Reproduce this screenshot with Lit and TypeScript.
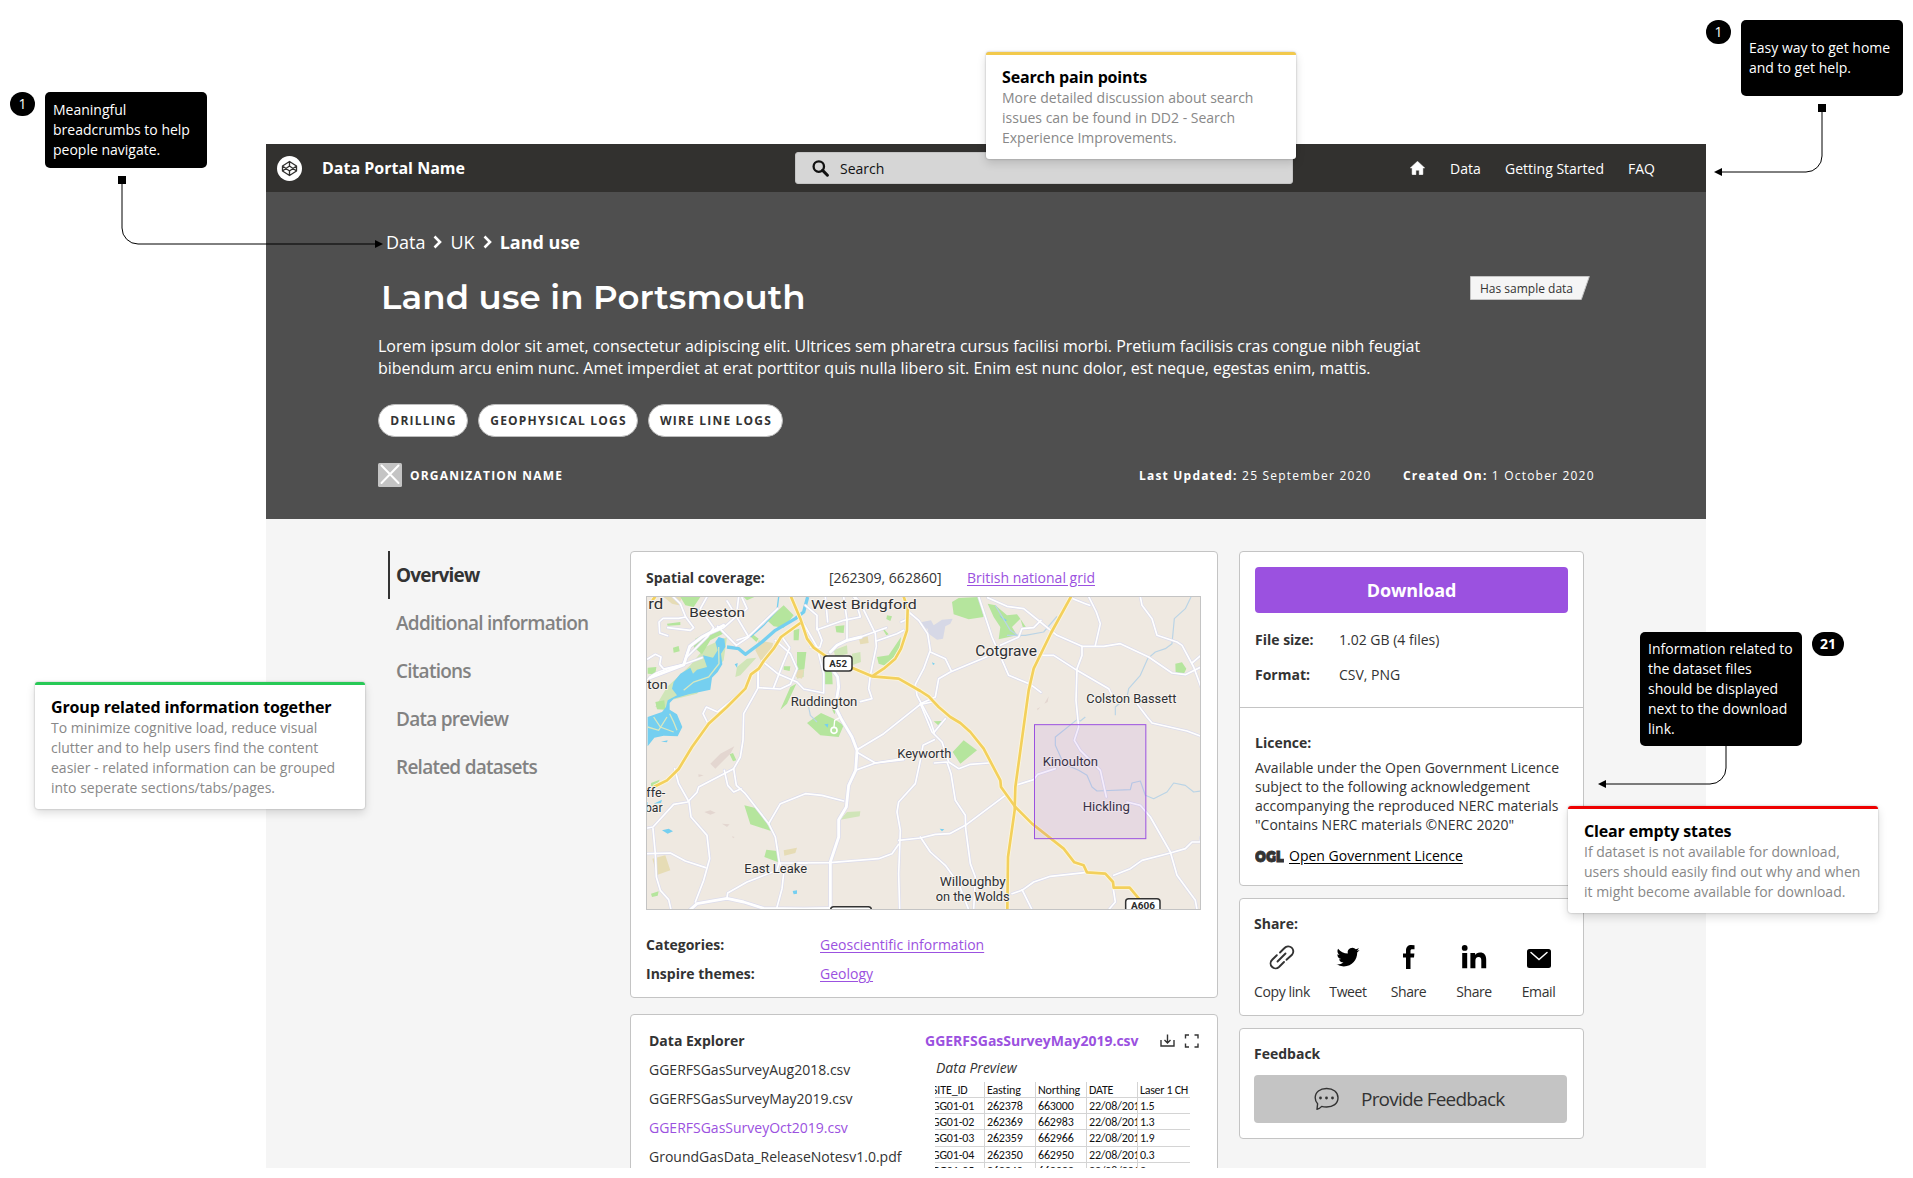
import { LitElement, html, css, svg } from "lit";
import { customElement, property } from "lit/decorators.js";

@customElement("coverage-map")
class CoverageMap extends LitElement {
  static styles = css`
    :host { display: block; box-sizing: border-box; width: 555px; height: 314px; border: 1px solid #c4c4c4; overflow: hidden; }
    svg { display: block; width: 100%; height: 100%; background: #efe9e1; }
    .case { fill: none; stroke: #dcdcec; stroke-linejoin: round; stroke-linecap: round; }
    .fill { fill: none; stroke: #ffffff; stroke-linejoin: round; stroke-linecap: round; }
    .ycase { fill: none; stroke: #fdf6dc; stroke-width: 13; stroke-linejoin: round; }
    .yellow { fill: none; stroke: #f3d05c; stroke-width: 8; stroke-linejoin: round; }
    .park { fill: #b5e59d; }
    .lightpark { fill: #d0e5b8; }
    .sand { fill: #e6dcb5; }
    .rock { fill: #e3d6d0; }
    .lake { fill: #75cff0; }
    .river { fill: none; stroke: #75cff0; stroke-linejoin: round; }
    .stream { fill: none; stroke: #bad4e6; stroke-width: 3.5; stroke-linejoin: round; }
    .isle { fill: none; stroke: #d8e8c0; stroke-width: 4; }
    .aero { fill: #d6d8e6; }
    .label { font-family: Roboto, "Open Sans", sans-serif; fill: #2e3033; stroke: #f7f3ee; stroke-width: 6; paint-order: stroke; stroke-linejoin: round; }
    .shield { fill: #fff; stroke: #333; stroke-width: 4.5; }
    .road { font-family: Roboto, "Open Sans", sans-serif; font-weight: 700; font-size: 29px; fill: #2b2b2b; }
    .area { fill: #9b51e0; fill-opacity: 0.1; stroke: #9b51e0; stroke-width: 3; }
  `;

  minor = [
    "M52 418C70 395 110 386 160 372L170 340L180 318L215 290L280 262L318 228L325 169",
    "M52 356L75 342L92 350L88 372L100 386L160 372L215 352",
    "M112 286L88 278L86 245L98 234L145 234L166 230L190 262L180 270L112 262",
    "M166 230L150 190L128 169", "M230 169L210 205L250 262L232 288L170 350",
    "M290 182L318 228L355 290L318 315L262 258", "M335 172L350 205L320 230",
    "M320 300L355 288L442 205", "M395 362L442 400L500 425L520 446L580 458L580 400L560 320L520 250",
    "M435 300L480 340L500 385L480 432L450 446L384 442L384 385", "M455 290L478 322L458 370L430 442",
    "M560 262L575 300L568 322L540 320", "M525 195L560 225L560 268L640 240L690 230L672 169",
    "M585 169L592 245", "M640 169L650 240L650 300L690 290L768 262",
    "M692 192L735 280L738 318L720 405L715 445L725 475L690 484",
    "M738 302L800 280L820 270M812 245L835 235",
    "M835 215L865 240L892 280L900 330L880 385L855 432L860 465L900 540L912 578",
    "M384 385L382 445L340 520L338 600L330 650L310 685L205 740L200 756L172 785L130 792L68 860L52 863",
    "M310 685L318 735L345 760L415 850L435 890L447 965L460 1000L455 1045L438 1108",
    "M282 690L292 735L310 755L332 745", "M232 548L218 520L228 500L262 515L340 450",
    "M133 685L145 730L176 785L182 830L230 885L238 955L220 1020L195 1085",
    "M68 865L75 940L78 1010L90 1050L115 1078L122 1108", "M52 940L120 938L165 962L226 982",
    "M415 850L450 790L525 760L575 765L640 782", "M500 968L598 967L745 955L785 940L805 912",
    "M447 968L530 968M447 965L440 990L350 1025L292 1058L290 1072",
    "M680 628L760 580L870 492L905 485", "M680 636L735 668L820 655",
    "M680 688L735 668L820 658M912 598L878 615L870 660L855 730L805 785L800 815L810 870L805 1000L808 1108",
    "M912 668L950 665L962 700L975 780L1005 825L1006 865L1012 910L1020 970L1035 1010L1030 1108",
    "M805 900L870 893L915 882L958 880L1005 855L1125 765",
    "M870 890L900 935L945 975L985 1030L1015 1108",
    "M870 490L905 575L935 605L955 665L985 685L1020 672L1075 668",
    "M912 575L945 535M870 490L915 470L925 415L960 395L1080 345M900 335L945 355L962 390",
    "M1045 169L1085 290L1135 405L1200 432L1232 456",
    "M1072 172L1130 198L1180 205L1230 245L1280 285L1355 318L1420 318L1470 310L1555 350L1625 398L1665 403L1712 380",
    "M1232 240L1210 262L1175 265L1165 290L1110 315", "M1220 345L1270 345L1340 390L1435 445L1445 465",
    "M1320 172L1365 190L1378 195M1375 169L1398 215L1410 250L1395 315",
    "M1355 318L1355 345L1340 385L1337 480L1345 560L1332 600L1350 630L1410 690L1428 770",
    "M1530 169L1535 195L1565 235L1580 285L1640 305L1655 315L1690 380L1712 440",
    "M1685 368L1712 345", "M1520 490L1550 530L1565 548L1670 572L1712 588",
    "M1155 735L1210 718L1222 702L1275 685", "M1490 785L1530 795L1560 830L1620 935L1640 1005L1695 1080L1700 1108",
    "M1450 1005L1500 985L1535 960L1620 938L1665 925L1685 905L1710 905L1712 890",
    "M1448 1040L1455 1085L1435 1108", "M1145 1060L1175 1050L1210 1025L1260 1008L1370 996M1175 1048L1205 1108",
  ];
  major = [
    "M592 345L600 380L622 410L625 440L615 500L635 540L665 590L680 630L676 690L655 735L648 800L625 838L625 890L600 965L600 1108",
    "M180 1108L200 1090L290 1074L340 1085L400 1104L520 1106L600 1104",
    "M600 335L620 315L650 300L692 290M692 192L672 169",
    "M60 412L160 374L178 318L215 290L280 255",
  ];
  trunk = [
    "M482 169L510 235L530 295L550 322L590 350L625 370L665 382L725 408L805 415L870 452L895 468L925 500L960 530L990 548L1020 575L1060 625L1110 720L1112 740L1155 800L1205 850L1300 925L1332 966L1360 975L1370 996L1425 1000L1448 1025L1450 1042L1498 1042L1530 1080",
    "M510 248L452 290L430 325L400 362L385 385L362 402L345 445L290 500L235 550L185 620L145 686L110 720L70 740",
    "M820 169L832 205L830 270L812 325L795 355L760 385L725 408",
    "M1322 169L1262 278L1210 385L1195 450L1155 740L1153 810L1133 950L1131 1108",
    "M66 180L75 169",
  ];
  places: [string, number, number, number, number][] = [
    ["rd", 54, 207, 45, 42], ["Beeston", 177, 229, 167, 40], ["West Bridgford", 542, 207, 317, 40],
    ["ton", 50, 447, 62, 40], ["Ruddington", 481, 497, 200, 37], ["Keyworth", 801, 653, 162, 37],
    ["ffe-", 48, 770, 57, 37], ["bar", 44, 814, 53, 37], ["East Leake", 342, 997, 188, 37],
    ["Cotgrave", 1035, 347, 185, 42], ["Colston Bassett", 1368, 487, 270, 37],
    ["Kinoulton", 1237, 678, 166, 37], ["Hickling", 1357, 811, 142, 37],
    ["Willoughby", 928, 1038, 198, 37], ["on the Wolds", 916, 1082, 222, 37],
  ];

  render() {
    return html`<svg viewBox="50 170 1659 936" preserveAspectRatio="none">
      <path class="lightpark" d="M75 500L110 440L180 375L225 320L290 290L280 360L200 460L120 480L110 505ZM320 380L350 355L378 352L330 405L315 410ZM610 330L650 315L652 340L615 350ZM665 340L690 335L692 365L665 375ZM630 838L650 815L690 813L688 828ZM500 340L525 335L520 410L500 415Z"/>
      <path class="sand" d="M100 170L155 170L145 195L125 190ZM385 300L428 308L425 335L395 368L375 330ZM685 292L712 288L715 308L690 312ZM500 385L520 390L515 415L497 410ZM66 955L105 945L120 990L80 1004ZM460 930L500 922L495 938L462 946Z"/>
      <path class="park" d="M150 170L210 170L190 200L165 195ZM410 240L460 195L490 225L460 262L430 258ZM190 320L195 295L240 270L262 262L278 280L240 300L215 342ZM128 322L145 317L148 333L130 337ZM52 382L78 380L75 402L52 400ZM75 485L102 480L105 508L80 507ZM110 250L150 245L150 254L112 256ZM365 280L385 295L378 305L362 290ZM490 270L507 265L505 300L490 300ZM500 335L528 335L522 385L500 390ZM580 385L605 390L607 432L582 432ZM615 258L642 255L640 278L618 276ZM740 350L775 345L812 290L808 325L770 378L745 370ZM760 265L775 282L768 285L758 268ZM770 225L785 228L780 242L768 236ZM460 378L480 378L478 392L460 388ZM480 440L498 430L470 490L450 508ZM530 548L572 518L610 535L640 555L625 590L570 585ZM298 642L308 638L318 660L308 663ZM342 795L375 803L420 848L422 872L360 852ZM408 928L440 932L444 966L402 950ZM62 1060L85 1053L82 1066L65 1070ZM62 728L88 718L80 735L62 738ZM603 502L617 512L612 522ZM340 170L372 170L350 180ZM965 185L985 173L1045 170L1060 230L1015 237L970 222ZM1072 190L1095 195L1130 225L1160 222L1170 235L1145 260L1160 285L1105 297L1110 260L1090 230ZM1170 235L1188 262L1178 262ZM1635 370L1655 366L1668 385L1660 402L1636 398ZM967 635L1000 600L1040 630L990 670ZM910 543L935 542L930 560Z"/>
      <path class="rock" d="M240 670L270 640L312 618L300 640L255 685ZM222 815L240 810L256 817L240 823ZM275 850L298 852L290 860ZM204 702L220 705L205 710ZM1220 505L1230 500L1222 510ZM1242 490L1255 468L1252 485ZM305 888L313 890L308 894Z"/>
      <path class="aero" d="M875 245L902 240L910 255L935 238L967 235L960 250L945 258L938 295L920 298L895 280L892 265L878 262Z"/>
      <path class="river" stroke-width="4" d="M445 170L440 210L400 255L360 290"/>
      <path class="river" stroke-width="10" d="M532 170L520 215L495 235L435 270L395 305L345 342L325 325L290 320"/>
      <path class="lake" d="M255 305L265 290L282 295L285 320L272 340L276 372L262 395L245 412L240 448L208 455L175 462L130 475L118 488L118 508L140 522L156 560L142 588L100 586L72 592L52 618L52 530L95 515L107 500L112 480L140 465L125 445L130 425L150 400L180 382L188 400L200 388L230 380L218 345L248 352L262 330ZM313 372L322 368L320 382ZM95 870L115 865L128 873L112 880ZM487 1052L500 1050L500 1060L490 1062ZM582 552L594 550L592 562ZM92 604L112 600L110 606ZM70 790L95 778L92 788ZM905 366L914 370L908 374ZM928 865L942 867L935 873ZM1106 225L1130 240L1124 243Z"/>
      <path class="isle" d="M52 560L85 570L110 530M70 530L90 560L130 575M118 520L130 545L140 570M265 320L266 370L235 410L190 425L160 450"/>
      <path class="stream" d="M1682 170L1665 205L1632 235L1625 310L1605 325L1575 335L1552 355L1530 405L1495 445L1490 470L1455 500L1455 525M1365 530L1350 542L1340 538L1275 590L1275 615L1300 670L1345 690L1370 705L1385 740L1400 752L1500 748L1505 728L1530 722L1545 765L1570 775L1610 755L1630 728L1665 735L1690 755L1712 752M1130 285L1185 285L1240 275L1280 228M1095 195L1140 270L1170 290M535 500L540 525L560 545"/>
      ${this.minor.map((d) => svg`<path class="case" stroke-width="9" d=${d} />`)}
      ${this.major.map((d) => svg`<path class="case" stroke-width="13" d=${d} />`)}
      ${this.minor.map((d) => svg`<path class="fill" stroke-width="5" d=${d} />`)}
      ${this.major.map((d) => svg`<path class="fill" stroke-width="8.5" d=${d} />`)}
      <circle cx="611" cy="570" r="9" fill="none" stroke="#fff" stroke-width="5" /><path class="fill" stroke-width="4" d="M611 560L613 540L628 532"/>
      ${this.trunk.map((d) => svg`<path class="ycase" d=${d} />`)}
      ${this.trunk.map((d) => svg`<path class="yellow" d=${d} />`)}
      <rect class="shield" x="580" y="347" width="85" height="45" rx="9" />
      <text class="road" x="597" y="379" textLength="53" lengthAdjust="spacingAndGlyphs">A52</text>
      <rect class="shield" x="1486" y="1075" width="103" height="45" rx="9" />
      <text class="road" x="1502" y="1106" textLength="72" lengthAdjust="spacingAndGlyphs">A606</text>
      <rect class="shield" x="601" y="1099" width="122" height="45" rx="9" />
      ${this.places.map(([t, x, y, w, s]) => svg`<text class="label" x=${x} y=${y} font-size=${s} textLength=${w} lengthAdjust="spacingAndGlyphs">${t}</text>`)}
      <rect class="area" x="1212.5" y="553" width="334" height="342" />
    </svg>`;
  }
}

@customElement("note-card")
class NoteCard extends LitElement {
  @property() heading = "";
  static styles = css`
    :host { display: block; box-sizing: border-box; background: #fff; border-top: 3px solid var(--accent); border-radius: 3px; padding: 12px 16px 11px; box-shadow: 0 0 2px rgba(0,0,0,.3), 0 4px 10px rgba(0,0,0,.14); font-size: 14px; line-height: 20px; color: #888; }
    .title { font-size: 16px; font-weight: 700; line-height: 21px; color: #000; white-space: nowrap; letter-spacing: -0.15px; }
  `;
  render() {
    return html`<div class="title">${this.heading}</div><slot></slot>`;
  }
}

@customElement("app-root")
class AppRoot extends LitElement {
  static styles = css`
    :host { display: block; position: relative; width: 1913px; height: 1178px; overflow: hidden; background: #fff; font-family: "Open Sans", "Noto Sans", sans-serif; font-size: 14px; color: #333; }
    * { box-sizing: border-box; }
    svg { display: block; flex: none; }
    .nowrap { white-space: nowrap; }
    .frame { width: 1440px; height: 1024px; margin: 0 0 0 266px; overflow: hidden; background: #f5f5f5; }
    .spacer { height: 144px; }
    .topbar { height: 48px; background: #32312f; color: #fff; display: grid; grid-template-columns: 529px 498px 117px auto; align-items: center; }
    .brand { display: flex; align-items: center; padding-left: 11px; gap: 20px; font-size: 16px; font-weight: 700; }
    .search { height: 32px; background: #d6d6d6; border: 1px solid #c4c4c4; border-radius: 3px; color: #111; display: flex; align-items: center; gap: 11px; padding-left: 16px; }
    .nav { grid-column: 4; display: flex; align-items: center; }
    .nav span { padding-top: 1px; }
    .nav .n1 { margin-left: 25px; width: 55px; }
    .nav .n2 { width: 123px; }
    .hero { height: 327px; background: #4f4f4f; color: #fff; padding: 36px 0 0 112px; }
    .crumbs { display: flex; align-items: center; height: 28px; padding-left: 8px; font-size: 18px; }
    .crumbs svg { margin: 0 8px; }
    .crumbs b { font-weight: 700; }
    .titlerow { display: flex; height: 40px; margin-top: 21px; }
    h1 { margin: 0; padding-left: 3px; width: 1092px; font: 600 34px/40px Montserrat, Inter, sans-serif; letter-spacing: 0.1px; white-space: nowrap; }
    .tag { position: relative; width: 120px; height: 25px; margin-top: -1px; color: #333; font-size: 12px; line-height: 25px; padding-left: 10px; white-space: nowrap; }
    .tag svg { position: absolute; left: 0; top: 0; }
    .tag span { position: relative; }
    .lead { margin: 18px 0 0; font-size: 16px; line-height: 22px; }
    .pills { display: flex; gap: 10px; margin-top: 25px; }
    .pill { height: 33px; border-radius: 17px; background: #fff; border: 1px solid #bdbdbd; color: #333; font-size: 12px; font-weight: 700; letter-spacing: 1.2px; line-height: 32px; text-align: center; padding-left: 1px; white-space: nowrap; }
    .p1 { width: 90px; } .p2 { width: 160px; } .p3 { width: 135px; }
    .meta { display: flex; align-items: center; height: 24px; margin-top: 26px; font-size: 12px; letter-spacing: 1.2px; }
    .meta .org { margin-left: 8px; width: 729px; font-weight: 700; }
    .meta .upd { width: 264px; }
    .content { display: grid; grid-template-columns: 242px 588px 345px; padding: 32px 0 0 122px; align-items: start; }
    .side { font-size: 19px; line-height: 48px; font-weight: 600; color: #828282; letter-spacing: -0.75px; }
    .side div { padding-left: 6px; height: 48px; border-left: 2px solid transparent; }
    .side .on { border-color: #333; color: #333; font-weight: 700; letter-spacing: -0.8px; }
    .card { background: #fff; border: 1px solid #c4c4c4; border-radius: 4px; }
    .main { display: grid; row-gap: 16px; }
    .right { display: grid; row-gap: 12px; margin-left: 21px; width: 345px; }
    .coverage { height: 447px; padding: 0 15px; }
    .crow { display: grid; grid-template-columns: 183px 138px auto; height: 44px; align-items: center; padding: 6px 0 0 0; }
    .lab { font-weight: 700; }
    .link { color: #9b51e0; text-decoration: underline; text-underline-offset: 2px; }
    .facts { display: grid; grid-template-columns: 174px auto; line-height: 29px; padding-top: 20px; }
    .explorer { height: 260px; padding: 11px 0 0 18px; display: grid; grid-template-columns: 276px auto; align-items: start; }
    .files { line-height: 29px; }
    .files .hot { color: #9b51e0; }
    .ptitle { display: flex; align-items: center; height: 29px; }
    .ptitle b { color: #9b51e0; width: 235px; font-weight: 700; }
    .prev { font-style: italic; padding-left: 11px; line-height: 25px; height: 27px; }
    .sheet { margin-left: 10px; width: 255px; overflow: hidden; }
    .srow { display: grid; grid-template-columns: 50px 51px 51px 51px 52px; height: 16.15px; border-bottom: 1px solid #d4d4d4; font: 12px/17px Carlito, Lato, sans-serif; color: #111; }
    .srow div { border-right: 1px solid #d4d4d4; overflow: hidden; white-space: nowrap; padding-left: 2px; letter-spacing: -0.15px; }
    .srow div:first-child { text-indent: -3px; padding-left: 0; }
    .srow div:last-child { border: 0; padding-left: 2px; letter-spacing: -0.3px; }
    .dl { height: 335px; }
    .dlbtn { margin: 15px 15px 0; height: 46px; border-radius: 4px; background: #9b51e0; color: #fff; font-size: 18px; font-weight: 700; line-height: 46px; text-align: center; letter-spacing: -0.15px; }
    .spec { display: grid; grid-template-columns: 84px auto; align-content: start; line-height: 35px; padding: 9px 0 0 15px; height: 94px; }
    .lic { border-top: 1px solid #c4c4c4; padding: 25px 0 0 15px; line-height: 19px; }
    .lic .lab { line-height: 20px; margin-bottom: 5px; }
    .ogl { display: flex; align-items: center; gap: 5px; margin-top: 12px; }
    .ogl text { font-family: Montserrat, Inter, sans-serif; font-weight: 900; font-size: 16px; fill: #333; stroke: #333; stroke-width: .8; }
    .ogl .ol { color: #000; text-decoration: underline; text-underline-offset: 2px; }
    .share { height: 118px; padding: 15px 0 0 14px; }
    .share .lab, .fb .lab { line-height: 20px; }
    .icons { display: grid; grid-template-columns: 56px 76px 45px 86px 43px; margin-top: 10px; letter-spacing: -0.4px; }
    .icons > div { display: grid; justify-items: center; row-gap: 12px; line-height: 20px; white-space: nowrap; }
    .icons svg { height: 26px; }
    .fb { height: 111px; padding: 15px 0 0 14px; }
    .fbbtn { margin-top: 11px; width: 313px; height: 48px; border-radius: 4px; background: #c4c4c4; display: flex; align-items: center; padding-left: 60px; gap: 22px; font-size: 19px; letter-spacing: -0.8px; }
    .over { position: absolute; }
    .links { left: 0; top: 0; }
    .callout { background: #000; color: #fff; border-radius: 5px; width: 162px; display: flex; align-items: center; padding-left: 8px; line-height: 20px; white-space: nowrap; }
    .dot { background: #000; color: #fff; border-radius: 12px; width: 25px; height: 24px; line-height: 24px; text-align: center; }
    .c1 { left: 45px; top: 92px; height: 76px; } .d1 { left: 10px; top: 92px; }
    .c2 { left: 1741px; top: 20px; height: 76px; } .d2 { left: 1706px; top: 20px; }
    .c3 { left: 1640px; top: 632px; height: 114px; } .d3 { left: 1812px; top: 632px; width: 32px; font-weight: 700; }
    .k1 { left: 986px; top: 52px; width: 310px; height: 107px; --accent: #f2c94c; }
    .k2 { left: 35px; top: 682px; width: 330px; height: 127px; --accent: #27c956; }
    .k3 { left: 1568px; top: 806px; width: 310px; height: 107px; --accent: #ee0000; }
  `;

  rows = [
    ["SITE_ID", "Easting", "Northing", "DATE", "Laser 1 CH"],
    ["GG01-01", "262378", "663000", "22/08/201", "1.5"],
    ["GG01-02", "262369", "662983", "22/08/201", "1.3"],
    ["GG01-03", "262359", "662966", "22/08/201", "1.9"],
    ["GG01-04", "262350", "662950", "22/08/201", "0.3"],
    ["GG01-05", "262340", "662933", "22/08/201", "2"],
  ];

  chevron() {
    return html`<svg width="9" height="14" viewBox="0 0 9 14"><path d="M1.5 1.5L7 7L1.5 12.5" fill="none" stroke="#fff" stroke-width="2.6"/></svg>`;
  }

  render() {
    return html`
      <div class="spacer"></div>
      <div class="frame">
        <div class="topbar">
          <div class="brand">
            <svg width="25" height="25" viewBox="0 0 25 25"><circle cx="12.5" cy="12.5" r="12.5" fill="#fff"/><g transform="translate(4.1 4.1) scale(.7)" fill="none" stroke="#32312f" stroke-width="1.9" stroke-linejoin="round"><path d="M12 2L22 8.5V15.5L12 22L2 15.5V8.5ZM12 22V15.5M22 8.5L12 15.5L2 8.5M2 15.5L12 8.5L22 15.5M12 2V8.5"/></g></svg>
            <span class="nowrap">Data Portal Name</span>
          </div>
          <div class="search">
            <svg width="17" height="17" viewBox="0 0 17 17"><circle cx="6.8" cy="6.6" r="5.2" fill="none" stroke="#111" stroke-width="2.3"/><path d="M10.6 10.4L15.4 15.2" stroke="#111" stroke-width="3" stroke-linecap="round"/></svg>
            <span>Search</span>
          </div>
          <div class="nav">
            <svg width="15" height="14" viewBox="0 0 15 14"><path d="M7.5 0.3L14.7 6.9H12.9V13.2Q12.9 13.7 12.4 13.7H9.2V9.2H5.9V13.7H2.6Q2.1 13.7 2.1 13.2V6.9H0.3Z" fill="#fff" stroke="#fff" stroke-width=".5" stroke-linejoin="round"/></svg>
            <span class="n1">Data</span><span class="n2 nowrap">Getting Started</span><span>FAQ</span>
          </div>
        </div>
        <div class="hero">
          <div class="crumbs"><span>Data</span>${this.chevron()}<span>UK</span>${this.chevron()}<b>Land use</b></div>
          <div class="titlerow">
            <h1>Land use in Portsmouth</h1>
            <div class="tag"><svg width="120" height="25" viewBox="0 0 120 25"><path d="M.5 .5H119.3L111.3 23.5H.5Z" fill="#f5f5f5" stroke="#c4c4c4"/></svg><span>Has sample data</span></div>
          </div>
          <p class="lead nowrap">Lorem ipsum dolor sit amet, consectetur adipiscing elit. Ultrices sem pharetra cursus facilisi morbi. Pretium facilisis cras congue nibh feugiat<br>bibendum arcu enim nunc. Amet imperdiet at erat porttitor quis nulla libero sit. Enim est nunc dolor, est neque, egestas enim, mattis.</p>
          <div class="pills"><div class="pill p1">DRILLING</div><div class="pill p2">GEOPHYSICAL LOGS</div><div class="pill p3">WIRE LINE LOGS</div></div>
          <div class="meta">
            <svg width="24" height="24" viewBox="0 0 24 24"><rect width="24" height="24" rx="1.5" fill="#c4c4c4"/><path d="M3.5 2.5L20.5 20M20.5 2.5L3.5 20" stroke="#fff" stroke-width="2" stroke-linecap="round"/></svg>
            <span class="org">ORGANIZATION NAME</span>
            <span class="upd nowrap"><b>Last Updated:</b> 25 September 2020</span>
            <span class="nowrap"><b>Created On:</b> 1 October 2020</span>
          </div>
        </div>
        <div class="content">
          <div class="side"><div class="on">Overview</div><div>Additional information</div><div>Citations</div><div>Data preview</div><div>Related datasets</div></div>
          <div class="main">
            <div class="card coverage">
              <div class="crow"><span class="lab">Spatial coverage:</span><span>[262309, 662860]</span><span><span class="link">British national grid</span></span></div>
              <coverage-map></coverage-map>
              <div class="facts"><span class="lab">Categories:</span><span class="link">Geoscientific information</span><span class="lab">Inspire themes:</span><span class="link">Geology</span></div>
            </div>
            <div class="card explorer">
              <div class="files"><div class="lab">Data Explorer</div><div>GGERFSGasSurveyAug2018.csv</div><div>GGERFSGasSurveyMay2019.csv</div><div class="hot">GGERFSGasSurveyOct2019.csv</div><div>GroundGasData_ReleaseNotesv1.0.pdf</div></div>
              <div>
                <div class="ptitle"><b>GGERFSGasSurveyMay2019.csv</b>
                  <svg width="39" height="14" viewBox="0 0 39 14" fill="none" stroke="#333" stroke-width="1.4"><path d="M1 6V12H14V6M7.5 .5V8.5M4.5 6L7.5 9L10.5 6"/><path d="M25.5 4.5V1H29M34.5 1H38V4.5M38 9.5V13H34.5M29 13H25.5V9.5"/></svg>
                </div>
                <div class="prev">Data Preview</div>
                <div class="sheet">${this.rows.map((r) => html`<div class="srow">${r.map((c) => html`<div>${c}</div>`)}</div>`)}</div>
              </div>
            </div>
          </div>
          <div class="right">
            <div class="card dl">
              <div class="dlbtn">Download</div>
              <div class="spec"><span class="lab">File size:</span><span>1.02 GB (4 files)</span><span class="lab">Format:</span><span>CSV, PNG</span></div>
              <div class="lic">
                <div class="lab">Licence:</div>
                <div class="nowrap">Available under the Open Government Licence<br>subject to the following acknowledgement<br>accompanying the reproduced NERC materials<br>"Contains NERC materials ©NERC 2020"</div>
                <div class="ogl"><svg width="29" height="14" viewBox="0 0 29 14"><text x="0" y="12.5" textLength="29" lengthAdjust="spacingAndGlyphs">OGL</text></svg><span class="ol">Open Government Licence</span></div>
              </div>
            </div>
            <div class="card share">
              <div class="lab">Share:</div>
              <div class="icons">
                <div><svg width="26" viewBox="0 0 26 26" fill="none" stroke="#333" stroke-width="1.9" stroke-linecap="round"><path d="M8.5 17.5L16.5 9.5"/><path d="M11 8.500L15.500 4A4.800 4.800 0 0 1 23 10.800L17.500 15.800"/><path d="M7.800 11.200L3.200 15.700A4.800 4.800 0 0 0 10 23L15 18"/></svg>Copy link</div>
                <div><svg width="26" viewBox="0 0 26 26"><path transform="translate(1.5 1.6) scale(.96)" d="M23.953 4.57a10 10 0 01-2.825.775 4.958 4.958 0 002.163-2.723c-.951.555-2.005.959-3.127 1.184a4.92 4.92 0 00-8.384 4.482C7.69 8.095 4.067 6.13 1.64 3.162a4.822 4.822 0 00-.666 2.475c0 1.71.87 3.213 2.188 4.096a4.904 4.904 0 01-2.228-.616v.06a4.923 4.923 0 003.946 4.827 4.996 4.996 0 01-2.212.085 4.936 4.936 0 004.604 3.417 9.867 9.867 0 01-6.102 2.105c-.39 0-.779-.023-1.17-.067a13.995 13.995 0 007.557 2.209c9.053 0 13.998-7.496 13.998-13.985 0-.21 0-.42-.015-.63A9.935 9.935 0 0024 4.59z"/></svg>Tweet</div>
                <div><svg width="26" viewBox="0 0 26 26"><path d="M18.500 1.200V5.200H16.300C15 5.200 14.500 5.800 14.500 7V9.500H18.400L18 13.600H14.500V25H10V13.600H7V9.500H10V6.500C10 3 12 1 15.300 1Q17.200 1 18.500 1.200Z"/></svg>Share</div>
                <div><svg width="26" viewBox="0 0 26 26"><circle cx="3.700" cy="3.900" r="2.900"/><path d="M1.200 9H6.200V24.300H1.200ZM9.400 9H14.100V11.100C15 9.500 16.700 8.600 18.900 8.600C23.400 8.600 25.200 11.300 25.200 15.800V24.300H20.300V16.700C20.300 14.300 19.800 13 17.700 13C15.300 13 14.400 14.600 14.400 16.900V24.300H9.400Z"/></svg>Share</div>
                <div><svg width="26" viewBox="0 0 26 26"><rect x="1" y="5" width="24" height="19" rx="2.5"/><path d="M5 8.5L13 15.5L21 8.5" fill="none" stroke="#fff" stroke-width="1.5" stroke-linecap="round"/></svg>Email</div>
              </div>
            </div>
            <div class="card fb">
              <div class="lab">Feedback</div>
              <div class="fbbtn"><svg width="25" height="24" viewBox="0 0 25 24"><path d="M3 22.300L3.600 16.800A9 9 0 0 1 1.200 10.800C1.200 5 6 1.500 12.600 1.500C19.300 1.500 24 5 24 10.800C24 16.800 19 20 12.600 20C10.600 20 9 19.800 7.700 19.400Q5.600 21.800 3 22.300Z" fill="none" stroke="#333" stroke-width="1.4" stroke-linejoin="round"/><g fill="#333"><circle cx="6.5" cy="11" r="1.4"/><circle cx="12.5" cy="11" r="1.4"/><circle cx="18.5" cy="11" r="1.4"/></g></svg><span class="nowrap">Provide Feedback</span></div>
            </div>
          </div>
        </div>
      </div>

      <svg class="over links" width="1913" height="1178" viewBox="0 0 1913 1178">
        <g fill="none" stroke="#000"><path d="M122 184V228A16 16 0 0 0 138 244H376"/><path d="M1822 112V156A16 16 0 0 1 1806 172H1721"/><path d="M1726 746V768A16 16 0 0 1 1710 784H1605"/></g>
        <path d="M118 176h8v8h-8zM1818 104h8v8h-8zM375 240L383 244L375 248ZM1722 168L1714 172L1722 176ZM1606 780L1598 784L1606 788Z"/>
      </svg>
      <div class="over dot d1">1</div><div class="over callout c1"><span>Meaningful<br>breadcrumbs to help<br>people navigate.</span></div>
      <div class="over dot d2">1</div><div class="over callout c2"><span>Easy way to get home<br>and to get help.</span></div>
      <div class="over dot d3">21</div><div class="over callout c3"><span>Information related to<br>the dataset files<br>should be displayed<br>next to the download<br>link.</span></div>
      <note-card class="over k1 nowrap" heading="Search pain points">More detailed discussion about search<br>issues can be found in DD2 - Search<br>Experience Improvements.</note-card>
      <note-card class="over k2 nowrap" heading="Group related information together">To minimize cognitive load, reduce visual<br>clutter and to help users find the content<br>easier - related information can be grouped<br>into seperate sections/tabs/pages.</note-card>
      <note-card class="over k3 nowrap" heading="Clear empty states">If dataset is not available for download,<br>users should easily find out why and when<br>it might become available for download.</note-card>
    `;
  }
}
